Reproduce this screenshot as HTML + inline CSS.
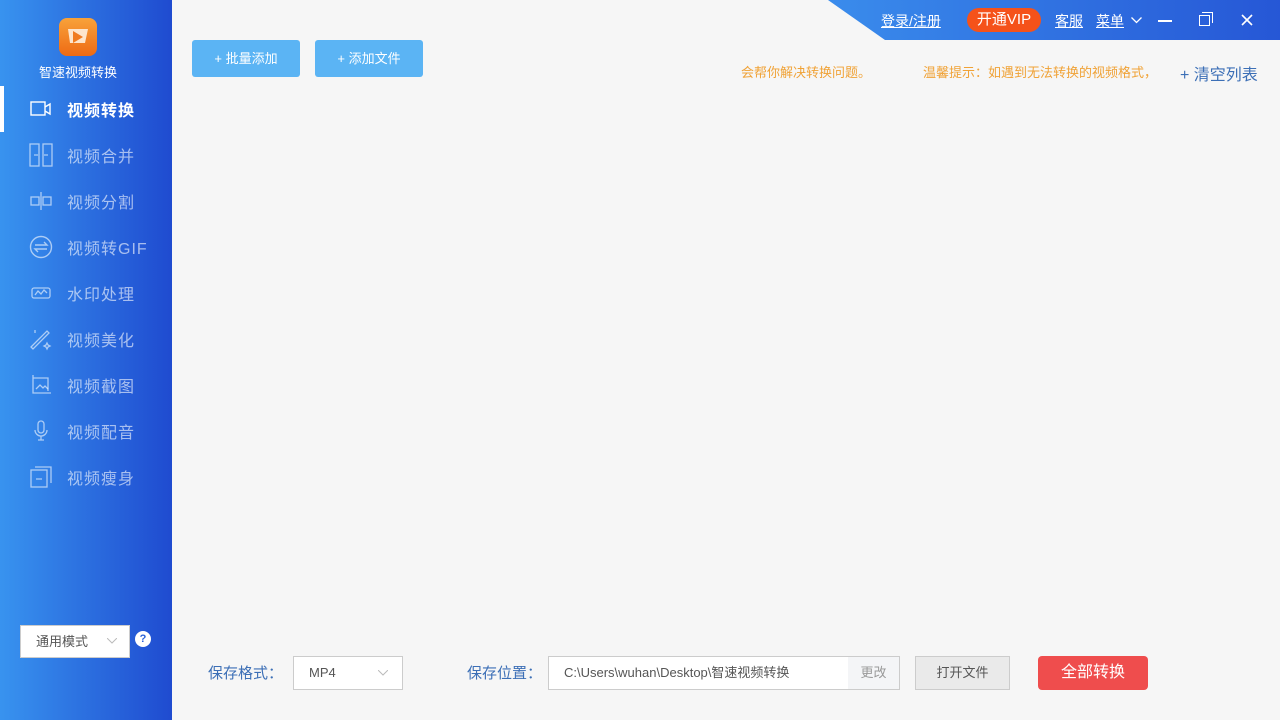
<!DOCTYPE html>
<html><head><meta charset="utf-8"><style>
*{margin:0;padding:0;box-sizing:border-box}
body{width:1280px;height:720px;background:#f6f6f6;font-family:"Liberation Sans","Noto Sans CJK SC",sans-serif;position:relative;overflow:hidden}
.side{position:absolute;left:0;top:0;width:172px;height:720px;background:linear-gradient(90deg,#3893ef,#1f4bd0)}
.logo{position:absolute;left:59px;top:18px;width:38px;height:38px;border-radius:8px;background:linear-gradient(#f8a23a,#ee6a14)}
.appn{position:absolute;left:0;width:156px;top:62px;text-align:center;color:#fff;font-size:13px}
.nav{position:absolute;left:0;width:172px;height:46px;display:flex;align-items:center;color:rgba(255,255,255,.6);font-size:16px;letter-spacing:1px}
.nav svg{position:absolute;left:29px;width:24px;height:24px}
.nav span{position:absolute;left:67px}
.act{color:#fff;font-weight:bold}
.act:before{content:"";position:absolute;left:0;top:0;width:4px;height:46px;background:#fff}
.top{position:absolute;left:828px;top:0;width:452px;height:40px;background:linear-gradient(90deg,#3a8cec,#2657d6);clip-path:polygon(0 0,100% 0,100% 100%,57px 100%)}
.t{position:absolute;color:#fff;font-size:14px;top:11px;text-decoration:underline}
.btn{position:absolute;top:40px;height:37px;background:#5bb4f4;color:#fff;font-size:13px;border-radius:3px;text-align:center;line-height:37px}
.lbl{position:absolute;color:#3c6fb6;font-size:15px;top:662px}
.box{position:absolute;top:656px;height:34px;border:1px solid #ccc;background:#fff;font-size:13px;color:#555;line-height:32px}
.chev{position:absolute}
</style></head><body>
<div class="side">
<div class="logo"><svg width="38" height="38"><path d="M9 11h20l-3 14H11z" fill="#fde5cc"/><path d="M14 13l10 6-10 6z" fill="#f07b20"/></svg></div>
<div class="appn">智速视频转换</div>
<div class="nav act" style="top:86px"><svg viewBox="0 0 24 24" fill="none" stroke="#fff" stroke-width="1.4"><rect x="2" y="5" width="14" height="13"/><path d="M16 10l5-3v10l-5-3"/></svg><span>视频转换</span></div>
<div class="nav" style="top:132px"><svg viewBox="0 0 24 24" fill="none" stroke="rgba(255,255,255,.6)" stroke-width="1.3"><rect x="1" y="1" width="9" height="22"/><rect x="14" y="1" width="9" height="22"/><path d="M5 12h4M19 12h-4"/></svg><span>视频合并</span></div>
<div class="nav" style="top:178px"><svg viewBox="0 0 24 24" fill="none" stroke="rgba(255,255,255,.6)" stroke-width="1.3"><rect x="2" y="8" width="8" height="8"/><rect x="14" y="8" width="8" height="8"/><path d="M12 3v18"/></svg><span>视频分割</span></div>
<div class="nav" style="top:224px"><svg viewBox="0 0 24 24" fill="none" stroke="rgba(255,255,255,.6)" stroke-width="1.4"><circle cx="12" cy="12" r="10.5"/><path d="M6 10h12l-3-3M18 14H6l3 3"/></svg><span>视频转GIF</span></div>
<div class="nav" style="top:270px"><svg viewBox="0 0 24 24" fill="none" stroke="rgba(255,255,255,.6)" stroke-width="1.3"><rect x="3" y="7" width="18" height="10" rx="2"/><path d="M6 14l3-4 3 3 3-4 3 3"/></svg><span>水印处理</span></div>
<div class="nav" style="top:316px"><svg viewBox="0 0 24 24" fill="none" stroke="rgba(255,255,255,.6)" stroke-width="1.3"><path d="M2 20L18 4l2 2L4 22z"/><path d="M6 3v3M18 16l1 2 2 1-2 1-1 2-1-2-2-1 2-1z"/></svg><span>视频美化</span></div>
<div class="nav" style="top:362px"><svg viewBox="0 0 24 24" fill="none" stroke="rgba(255,255,255,.6)" stroke-width="1.3"><path d="M4 2v18h18M4 5h15v13"/><path d="M7 16l4-4 3 3 2-2 3 3"/></svg><span>视频截图</span></div>
<div class="nav" style="top:408px"><svg viewBox="0 0 24 24" fill="none" stroke="rgba(255,255,255,.6)" stroke-width="1.3"><rect x="9" y="2" width="6" height="12" rx="3"/><path d="M6 11a6 6 0 0012 0M12 17v4M9 21h6"/></svg><span>视频配音</span></div>
<div class="nav" style="top:454px"><svg viewBox="0 0 24 24" fill="none" stroke="rgba(255,255,255,.6)" stroke-width="1.3"><rect x="2" y="5" width="16" height="17"/><path d="M6 2h16v16M7 14h6"/></svg><span>视频瘦身</span></div>
<div style="position:absolute;left:20px;top:625px;width:110px;height:33px;background:#fff;border:1px solid #ccc;font-size:13px;color:#555;line-height:31px;padding-left:15px">通用模式<svg class="chev" style="right:12px;top:12px" width="10" height="6"><path d="M0 0l5 5 5-5" fill="none" stroke="#bbb"/></svg></div>
<div style="position:absolute;left:135px;top:631px;width:16px;height:16px;border-radius:50%;background:#fff;color:#2a62d8;font-size:11px;font-weight:bold;text-align:center;line-height:16px">?</div>
</div>
<div class="top"></div>
<div class="t" style="left:881px">登录/注册</div>
<div style="position:absolute;left:967px;top:8px;width:74px;height:24px;border-radius:12px;background:#f5521a;color:#fff;font-size:15px;text-align:center;line-height:24px">开通VIP</div>
<div class="t" style="left:1055px">客服</div>
<div class="t" style="left:1096px">菜单</div>
<svg class="chev" style="left:1131px;top:17px" width="11" height="7"><path d="M0.5 0.5l5 5 5-5" fill="none" stroke="#fff" stroke-width="1.3"/></svg>
<div style="position:absolute;left:1158px;top:20px;width:14px;height:1.5px;background:#fff"></div>
<div style="position:absolute;left:1199px;top:15px;width:11px;height:11px;border:1.5px solid #fff"></div>
<div style="position:absolute;left:1202px;top:12px;width:11px;height:11px;border-top:1.5px solid #fff;border-right:1.5px solid #fff"></div>
<svg style="position:absolute;left:1241px;top:14px" width="12" height="12"><path d="M1 1l10 10M11 1L1 11" stroke="#fff" stroke-width="1.6"/></svg>
<div class="btn" style="left:192px;width:108px">+ 批量添加</div>
<div class="btn" style="left:315px;width:108px">+ 添加文件</div>
<div style="position:absolute;left:741px;top:62px;color:#f0a236;font-size:13px">会帮你解决转换问题。</div>
<div style="position:absolute;left:923px;top:62px;color:#f0a236;font-size:13px">温馨提示：如遇到无法转换的视频格式，</div>
<div style="position:absolute;left:1180px;top:61px;color:#3c6fb6;font-size:16px">+ 清空列表</div>
<div class="lbl" style="left:208px">保存格式：</div>
<div class="box" style="left:293px;width:110px;padding-left:15px">MP4<svg class="chev" style="right:14px;top:13px" width="10" height="6"><path d="M0 0l5 5 5-5" fill="none" stroke="#bbb"/></svg></div>
<div class="lbl" style="left:467px">保存位置：</div>
<div class="box" style="left:548px;width:352px;padding-left:15px">C:\Users\wuhan\Desktop\智速视频转换<span style="position:absolute;right:0;top:0;width:51px;height:32px;background:#f4f5f7;color:#999;text-align:center">更改</span></div>
<div class="box" style="left:915px;width:95px;background:#eaeaea;text-align:center">打开文件</div>
<div style="position:absolute;left:1038px;top:656px;width:110px;height:34px;border-radius:4px;background:#ef4d4d;color:#fff;font-size:16px;text-align:center;line-height:34px">全部转换</div>
</body></html>
